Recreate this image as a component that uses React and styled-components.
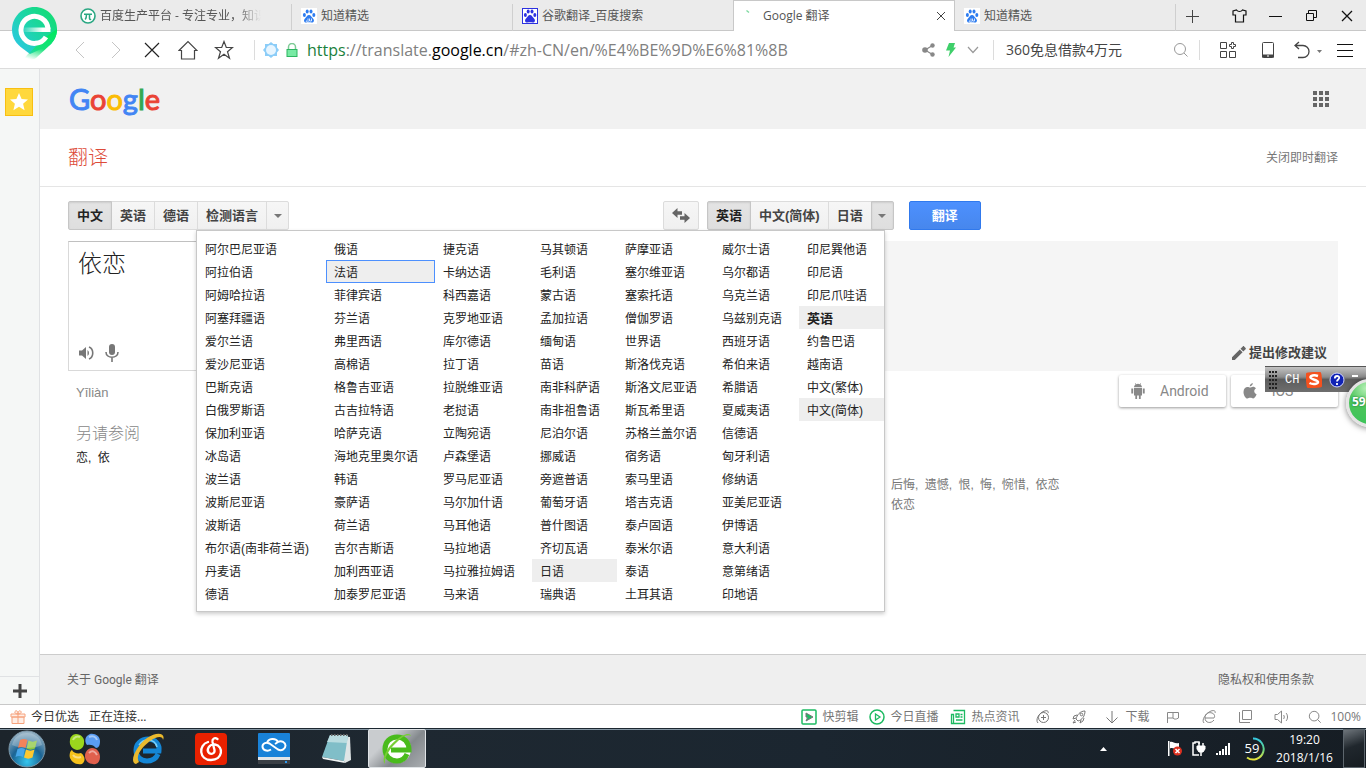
import React from 'react';
import styled, { createGlobalStyle, css } from 'styled-components';

const CJK = '"Noto Sans CJK SC"';
const uiFont = `"Open Sans", ${CJK}, sans-serif`;
const webFont = `"Liberation Sans", ${CJK}, sans-serif`;

const GlobalStyle = createGlobalStyle`
  *, *::before, *::after { box-sizing: border-box; }
  body { margin: 0; background: #fff; color: #333; font: 12px/16px ${webFont}; }
  button, input, textarea { font: inherit; color: inherit; margin: 0; padding: 0; border: 0; background: none; border-radius: 0; outline: none; }
  button { cursor: pointer; white-space: nowrap; }
  a { color: inherit; text-decoration: none; }
  ul, h1, h2, p { margin: 0; padding: 0; list-style: none; font-weight: normal; }
  svg { display: block; flex: none; }
`;

const Screen = styled.div`
  position: relative;
  display: flex;
  flex-direction: column;
  min-height: 100vh;
  overflow: hidden;
`;

/* ---------- tab strip ---------- */
const TabStrip = styled.div`
  display: flex;
  height: 31px;
  padding-left: 71px;
  background: #ebebeb;
  box-shadow: inset 0 -1px #c8c8c8;
  font-family: ${uiFont};
`;

const Tab = styled.div`
  display: flex;
  align-items: center;
  flex: 0 1 221px;
  min-width: 0;
  padding-left: 9px;
  gap: 4px;
  color: #555;
  ${p => p.$active ? css`
    background: #fff;
    border: 1px solid #c8c8c8;
    border-bottom: 0;
    margin-left: -1px;
    flex-basis: 222px;
    padding-right: 6px;
  ` : css`
    &::after { content: ''; align-self: flex-end; width: 1px; height: 27px; background: #cfcfcf; }
  `}
`;

const TabTitle = styled.span`
  flex: 1;
  min-width: 0;
  overflow: hidden;
  white-space: nowrap;
  margin-right: 26px;
  ${p => p.$fade && css`mask-image: linear-gradient(90deg, #000 85%, transparent);`}
`;

const IconButton = styled.button`
  display: flex;
  align-items: center;
  justify-content: center;
  flex: none;
  width: ${p => p.$w || 36}px;
  margin-right: ${p => p.$mr || 0}px;
  color: ${p => p.$color || '#444'};
`;

const WindowButtons = styled.div`
  display: flex;
  margin-left: auto;
  padding-right: 1px;
`;

const BrowserLogo = styled.div`
  position: absolute;
  left: 11px;
  top: 6px;
`;

/* ---------- toolbar ---------- */
const Toolbar = styled.div`
  display: flex;
  align-items: center;
  height: 38px;
  padding: 0 4px 0 62px;
  border-bottom: 1px solid #dcdcdc;
  font-family: ${uiFont};
  ${IconButton} { height: 36px; }
`;

const Rule = styled.span`
  flex: none;
  width: 1px;
  height: 20px;
  margin: 0 ${p => p.$r}px 0 ${p => p.$l}px;
  background: #dcdcdc;
`;

const Address = styled.div`
  flex: 1;
  min-width: 0;
  display: flex;
  overflow: hidden;
  white-space: nowrap;
  margin-left: 3px;
  color: #808080;
  font-size: 16px;
  line-height: 20px;
`;
const Secure = styled.span`color: #1a7f3c;`;
const Domain = styled.span`color: #000;`;

const SearchInput = styled.input`
  width: 164px;
  font-size: 14px;
  line-height: 20px;
  &::placeholder { color: #444; opacity: 1; }
`;

/* ---------- page shell ---------- */
const Body = styled.div`
  display: flex;
  flex: 1;
`;

const SideBar = styled.aside`
  display: flex;
  flex-direction: column;
  justify-content: space-between;
  width: 40px;
  background: #f5f7f6;
  border-right: 1px solid #e0e2e4;
`;

const Favorites = styled.button`
  display: flex;
  align-items: center;
  justify-content: center;
  width: 28px;
  height: 28px;
  margin: 19px 5px;
  background: #ffd83c;
  border: 1px solid #f8bf12;
`;

const AddPanel = styled(IconButton)`
  width: 39px;
  height: 28px;
  border-top: 1px solid #e0e2e4;
`;

const Page = styled.div`
  display: flex;
  flex-direction: column;
  flex: 1;
  min-width: 0;
`;

const GoogleBar = styled.header`
  display: flex;
  align-items: center;
  justify-content: space-between;
  height: 60px;
  padding: 0 36px 0 29px;
  background: #f1f1f1;
`;

const Wordmark = styled.a`
  font: 29px/36px Lato, sans-serif;
`;
const Letter = styled.span`
  color: ${p => p.$color};
  -webkit-text-stroke: 1px ${p => p.$color};
`;

const TitleBar = styled.div`
  display: flex;
  align-items: center;
  justify-content: space-between;
  height: 58px;
  padding: 0 28px;
  border-bottom: 1px solid #e5e5e5;
  color: #777;
`;

const Title = styled.h1`
  color: #dd4b39;
  font-size: 20px;
  font-weight: 300;
  line-height: 28px;
`;

const Workspace = styled.main`
  position: relative;
  display: grid;
  grid-template-columns: 1fr 1fr;
  align-content: start;
  column-gap: 8px;
  flex: 1;
  padding: 14px 28px 24px;
`;

const Controls = styled.div`
  display: flex;
  height: 29px;
  margin-bottom: 11px;
`;

const LangButton = styled.button`
  display: flex;
  align-items: center;
  justify-content: center;
  padding: 1px 8px 0;
  ${p => p.$arrow && css`width: 23px; padding: 0;`}
  border: 1px solid ${p => p.$pressed ? '#c6c6c6' : '#dcdcdc'};
  background: ${p => p.$pressed ? 'linear-gradient(#e4e4e4, #dedede)' : 'linear-gradient(#f6f6f6, #f0f0f0)'};
  ${p => p.$pressed && css`box-shadow: inset 0 1px 2px rgba(0, 0, 0, .1); position: relative;`}
  color: ${p => p.$arrow ? '#777' : p.$pressed ? '#222' : '#444'};
  font-size: 13px;
  font-weight: bold;
  & + & { margin-left: -1px; }
  &:first-child { border-radius: 2px 0 0 2px; }
  &:last-of-type { border-radius: 0 2px 2px 0; }
`;

const LangGroup = styled.div`display: flex;`;

const SwapButton = styled(IconButton)`
  margin-left: auto;
  border: 1px solid #dcdcdc;
  border-radius: 2px;
  background: linear-gradient(#f6f6f6, #f0f0f0);
`;

const TranslateButton = styled.button`
  width: 72px;
  margin-left: 15px;
  padding-top: 1px;
  border: 1px solid #3079ed;
  border-radius: 2px;
  background: linear-gradient(#4d90fe, #4787ed);
  color: #fff;
  font-size: 13px;
  font-weight: bold;
`;

const SourceBox = styled.div`
  display: flex;
  flex-direction: column;
  height: 130px;
  border: 1px solid #d9d9d9;
  border-top-color: #c0c0c0;
`;

const SourceText = styled.textarea`
  flex: 1;
  resize: none;
  padding: 6px 9px;
  color: #222;
  font-size: 24px;
  font-weight: 300;
  line-height: 32px;
`;

const BoxTools = styled.div`
  display: flex;
  height: 34px;
  padding-left: 4px;
  color: #777;
`;

const OutputBox = styled.div`
  display: flex;
  align-items: flex-end;
  justify-content: flex-end;
  height: 130px;
  padding: 0 11px 8px;
  background: #f5f5f5;
`;

const SuggestButton = styled.button`
  display: flex;
  align-items: center;
  gap: 3px;
  height: 20px;
  color: #444;
  font-size: 13px;
  font-weight: bold;
  svg { color: #666; }
`;

const SourceNotes = styled.section`padding: 14px 8px 0;`;
const Pinyin = styled.p`
  color: #888;
  font-size: 13px;
  line-height: 16px;
`;
const SeeAlso = styled.h2`
  margin-top: 21px;
  color: #888;
  font-size: 16px;
  font-weight: 300;
  line-height: 24px;
`;
const SeeAlsoWords = styled.p`
  margin-top: 4px;
  color: #222;
`;
const Word = styled.a`
  &:not(:last-child)::after { content: ','; }
  &:not(:last-child) { margin-right: 3px; }
`;

const TargetNotes = styled.section`padding-top: 4px;`;

const StoreButtons = styled.div`
  display: flex;
  justify-content: flex-end;
  gap: 5px;
`;
const StoreButton = styled.a`
  display: flex;
  align-items: center;
  width: 107px;
  height: 32px;
  padding-left: 12px;
  gap: 15px;
  border-radius: 2px;
  background: #fff;
  box-shadow: 0 1px 3px rgba(0, 0, 0, .4);
  color: #888;
  font: 14px/20px Roboto, sans-serif;
`;

const Synonyms = styled.ul`
  margin-top: 68px;
  padding-left: 184px;
  color: #777;
  line-height: 20px;
`;

const LanguageMenu = styled.div`
  position: absolute;
  left: 156px;
  top: 43px;
  display: flex;
  padding: 6px 0;
  background: #fff;
  border: 1px solid #c8c8c8;
  box-shadow: 0 2px 4px rgba(0, 0, 0, .2);
`;

const LanguageColumn = styled.ul`width: ${p => p.$w}px;`;

const LanguageItem = styled.li`
  height: 23px;
  padding: ${p => p.$focus ? '3px 0 0 7px' : '4px 0 0 8px'};
  border: ${p => p.$focus ? '1px solid #4d90fe' : '0'};
  background: ${p => p.$mark || p.$focus ? '#eee' : 'none'};
  color: #222;
  font-size: ${p => p.$bold ? 13 : 12}px;
  font-weight: ${p => p.$bold ? 'bold' : 'normal'};
  line-height: ${p => p.$bold ? 17 : 19}px;
  white-space: nowrap;
`;

const PageFooter = styled.footer`
  display: flex;
  align-items: center;
  justify-content: space-between;
  height: 50px;
  padding: 0 52px 0 27px;
  border-top: 1px solid #ccc;
  background: #efefef;
  color: #666;
  font-family: Roboto, ${CJK}, sans-serif;
`;

/* ---------- status bar ---------- */
const StatusBar = styled.div`
  display: flex;
  align-items: center;
  height: 24px;
  padding: 0 5px 0 10px;
  border-top: 1px solid #c8c8c8;
  background: #fff;
  font-family: ${uiFont};
`;

const StatusItem = styled.button`
  display: flex;
  align-items: center;
  gap: ${p => p.$gap || 5}px;
  margin-right: ${p => p.$mr || 0}px;
  color: ${p => p.$dark ? '#333' : '#777'};
`;

const StatusTools = styled.div`
  display: flex;
  align-items: center;
  margin-left: auto;
`;

/* ---------- desktop ---------- */
const TaskBar = styled.div`
  display: flex;
  height: 40px;
  border-top: 1px solid #1c2730;
  background: linear-gradient(90deg, #1c242b, #1e2831 30%, #1b2630 60%, #161d24);
  box-shadow: inset 0 1px #8496a3;
  color: #fff;
  font-family: ${uiFont};
`;

const TaskButton = styled(IconButton)`
  ${p => p.$open && css`
    border: 1px solid #dfe3e6;
    border-radius: 2px;
    background: linear-gradient(135deg, #c9cccf 30%, #84898d 60%, #a9adb0);
  `}
`;

const Tray = styled.div`
  display: flex;
  margin-left: auto;
  padding-right: 1px;
`;

const Clock = styled.time`
  width: 77px;
  padding-top: 2px;
  text-align: center;
  line-height: 18px;
`;

const ShowDesktop = styled.button`
  width: 22px;
  border: 1px solid #5d666d;
  background: linear-gradient(160deg, #6d747a, #20272d 45%, #161c21);
`;

const ImeBar = styled.div`
  position: absolute;
  right: 0;
  top: 366px;
  display: flex;
  align-items: center;
  gap: 7px;
  width: 101px;
  height: 26px;
  padding-left: 4px;
  border-top: 1px solid #555;
  background: linear-gradient(#c2c2c2, #8c8c8c 40%, #5c5c5c 50%, #6e6e6e);
  color: #fff;
  font: 12px/16px "Liberation Mono", monospace;
`;

const Ball = styled.div`
  position: absolute;
  right: -28px;
  top: 379px;
  width: 48px;
  height: 48px;
  padding-left: 3px;
  border: 3px solid #e4e4e4;
  border-radius: 50%;
  background: radial-gradient(circle at 40% 15%, #b4efb4, #4cc45a 40%, #36c45a);
  box-shadow: 0 1px 6px rgba(0, 0, 0, .5);
  color: #fff;
  font: bold 12px/40px "Open Sans", sans-serif;
  text-shadow: 0 0 2px #063;
`;

/* ---------- drawings ---------- */
const Line = ({ w = 16, h = w, vb, sw = 1, children, ...rest }) => (
  <svg width={w} height={h} viewBox={vb || `0 0 ${w} ${h}`} fill="none" stroke="currentColor" strokeWidth={sw} {...rest}>{children}</svg>
);
const Solid = ({ w = 16, h = w, vb, children, ...rest }) => (
  <svg width={w} height={h} viewBox={vb || `0 0 ${w} ${h}`} fill="currentColor" {...rest}>{children}</svg>
);

const Paw = ({ bg, fg, framed }) => (
  <Solid>
    <rect width="16" height="16" fill={bg} />
    {framed && <rect x=".5" y=".5" width="15" height="15" fill="none" stroke={fg} />}
    <g fill={fg}>
      <ellipse cx="3.4" cy="7" rx="1.500" ry="2" />
      <ellipse cx="6.2" cy="3.6" rx="1.500" ry="2" />
      <ellipse cx="10" cy="3.6" rx="1.500" ry="2" />
      <ellipse cx="12.8" cy="7" rx="1.500" ry="2" />
      <path d="M8 7c2 0 2.300 2 4 3.500 2 2 .5 4.500-1.500 4-1.800-.4-3.200-.4-5 0-2 .5-3.500-2-1.500-4C5.700 9 6 7 8 7z" />
    </g>
    {!framed && <path d="M5.500 12.500a1 1 0 1 0 1.500 0v-2M8.500 10.500v2.500h2v-2.500" fill="none" stroke="#fff" strokeWidth=".8" />}
  </Solid>
);

const PiIcon = () => (
  <Line><circle cx="8" cy="8" r="7" stroke="#2aa782" strokeWidth="1.600" fill="#fff" /><path d="M4 6.200h8M6.500 6.200c0 2-.3 4-1.300 5.300M9.500 6.200v4c0 1.200.6 1.500 1.600 1" stroke="#2aa782" strokeWidth="1.500" /></Line>
);

const PinLogo = () => (
  <svg width="47" height="56" viewBox="0 0 47 56">
    <defs>
      <linearGradient id="pin" x1="0" y1="1" x2="1" y2=".2"><stop offset="0" stopColor="#2fc4f0" /><stop offset=".45" stopColor="#1fd3b4" /><stop offset="1" stopColor="#12dd72" /></linearGradient>
      <linearGradient id="tail" x1=".7" y1="0" x2=".4" y2="1"><stop offset="0" stopColor="#00e860" /><stop offset=".6" stopColor="#17e27a" /><stop offset="1" stopColor="#17e27a" stopOpacity="0" /></linearGradient>
      <linearGradient id="bar" x1="0" x2="1"><stop offset="0" stopColor="#fff" stopOpacity=".1" /><stop offset=".7" stopColor="#fff" /></linearGradient>
    </defs>
    <path d="M23.500 1C11 1 1 11 1 23.500 1 33 6 38 11 42l8 6 20-9c4-4 7-9 7-15.500C46 11 36 1 23.500 1z" fill="url(#pin)" />
    <path d="M46 23c0 7-3 12-7 16L25 52c-3 2-9 3-14 3l6-7 19-18z" fill="url(#tail)" />
    <path d="M35 31a13.500 13.500 0 1 1 2-8" fill="none" stroke="#fff" strokeWidth="5" />
    <path d="M13 21.500h26.500v4.500H13z" fill="url(#bar)" />
  </svg>
);

const Lock = () => (
  <Line w={12} h={14}><path d="M2.500 6V4a3.500 3.500 0 0 1 7 0v2" stroke="#7ecb96" strokeWidth="1.500" /><rect x="1" y="6.500" width="10" height="7" fill="#78eaa4" stroke="#2db561" /></Line>
);
const Sun = () => (
  <Solid w={18}><path d="M9 1l2.400 2H15v3.600L17 9l-2 2.400V15h-3.600L9 17l-2.400-2H3v-3.600L1 9l2-2.400V3h3.600z" fill="#8ccdf8" /><circle cx="9" cy="9" r="5" fill="#e7f5ff" /></Solid>
);
const Search = ({ w = 16 }) => <Line w={w} vb="0 0 16 16"><circle cx="7" cy="7" r="5.500" /><path d="M11 11l3.500 3.500" /></Line>;
const Caret = () => <Solid w={8} h={4}><path d="M0 0h8L4 4z" /></Solid>;
const Apple = () => (
  <Solid w={14} h={16}><path d="M9.800 0c.1 1.700-1.300 3.400-3 3.400C6.600 1.700 8.200.2 9.800 0zM7 4.500c.8 0 1.600-.8 3-.8 1.200 0 2.300.6 3 1.600-2.600 1.600-2.200 5 .6 6-.7 2-2 4.200-3.400 4.200-1.100 0-1.500-.7-2.900-.7s-1.800.7-2.900.7C2.500 15.500.5 12 .5 8.900c0-3.200 2-5 4-5 1.200 0 1.900.6 2.500.6z" /></Solid>
);
const Android = () => (
  <Solid w={14} h={16}><path d="M3 5h8v7.500H9.700V16H7.900v-3.500H6.100V16H4.300v-3.500H3zM.3 5.500h1.900v5H.3zm11.500 0h1.900v5h-1.900zM3 4.300c0-1.300.7-2.200 1.600-2.800L3.900.4l.4-.3.8 1.200a4.500 4.500 0 0 1 3.800 0L9.700.1l.4.3-.7 1.100c.9.600 1.600 1.500 1.600 2.800z" /></Solid>
);

const StartOrb = () => (
  <svg width="38" height="38" viewBox="0 0 38 38">
    <defs><radialGradient id="orb" cx=".5" cy=".85" r=".85"><stop offset="0" stopColor="#35c6ee" /><stop offset=".5" stopColor="#1b6494" /><stop offset="1" stopColor="#9fb8c8" /></radialGradient></defs>
    <circle cx="19" cy="19" r="18" fill="url(#orb)" stroke="#7c97a8" />
    <path d="M12 10c2.500-1.500 5-1.500 7.500 0l-2 8c-2.500-1.500-5-1.500-7.500 0z" fill="#ee5a24" />
    <path d="M20.500 10.500c3 1.500 5.500 1.500 8.500 0l-2 8c-3 1.500-5.500 1.500-8.500 0z" fill="#8cc63f" />
    <path d="M9.500 19c3-1.500 5-1.500 7.500 0l-2 8c-2.500-1.500-5-1.500-7.500 0z" fill="#46a6e8" />
    <path d="M18 19.500c3 1.500 5.500 1.500 8.500 0l-2 8c-3 1.500-5.500 1.500-8.500 0z" fill="#fdc82f" />
    <path d="M4 15C6 6 13 3 19 3s13 3 15 12c-8 4-22 4-30 0z" fill="#fff" opacity=".25" />
  </svg>
);
const Petals = () => (
  <svg width="32" height="32" viewBox="0 0 32 32">
    <path d="M7 1c5 0 9 4 8 9 0 4-3 7-7 7-5-1-8-5-7-10 0-3 3-6 6-6z" fill="#9bd61d" />
    <path d="M21 1c5-1 10 2 10 7 0 4-1 7-4 7-2-3-6-4-9-3-3-4-2-9 3-11z" fill="#5a9cf2" />
    <path d="M3 17c1 3 6 4 9 3 4 3 5 8 1 11-5 1-10-1-12-6-1-3 0-7 2-8z" fill="#f6c11b" />
    <path d="M23 15c5 0 8 4 8 9s-3 8-7 7c-5 0-8-4-8-8s3-8 7-8z" fill="#e0604d" />
    <path d="M4 7c1-3 4-4 7-3M20 4c4-2 7 0 8 3M4 22c2 3 5 3 8 2M20 20c3-3 6-2 8 2" stroke="#fff" strokeOpacity=".45" strokeWidth="2" fill="none" />
  </svg>
);
const IeIcon = () => (
  <svg width="34" height="32" viewBox="0 0 34 32">
    <path d="M27 21c-2 5-6 7-11 7-7 0-11-5-11-11S10 6 17 6c7 0 12 5 11 12H12" fill="none" stroke="#1486d6" strokeWidth="5" />
    <path d="M8 12c2-3 5-5 9-5 5 0 8 3 9 7" fill="none" stroke="#7cd0f8" strokeWidth="1.500" />
    <path d="M5 31C-2 30 4 14 16 5 26-2 35 0 32 7c0-4-6-4-13 1C11 14 4 23 8 29z" fill="#eab92d" />
  </svg>
);
const NetEase = () => (
  <svg width="32" height="32" viewBox="0 0 32 32">
    <rect width="32" height="32" rx="4" fill="#e92100" />
    <path d="M13 9C3 12 4 27 16 27c12 0 13-14 4-15.500-6-.5-9 5.500-6 8.500 3 2 6 0 5.500-3L17.500 9c-.5-3 2-5 5-3" fill="none" stroke="#fff" strokeWidth="2.300" strokeLinecap="round" />
  </svg>
);
const CloudDrive = () => (
  <svg width="32" height="32" viewBox="0 0 32 32">
    <rect width="32" height="25" rx="1" fill="#1982d8" />
    <path d="M0 25h32v6H0z" fill="#3a3f45" /><path d="M0 24h32v3H0z" fill="#e3e6e8" /><path d="M27 28h2v2h-2z" fill="#2f9bf0" />
    <path d="M13 16.500C9 19 4.500 17 4.500 13.500s4-4.500 7-3l8.500 6c4 2 7.500-1 7.500-4s-4-5.500-7.500-3.500l-3 2M9 10c1-5 9-5.500 11-1" fill="none" stroke="#fff" strokeWidth="2" />
  </svg>
);
const Notepad = () => (
  <svg width="32" height="30" viewBox="0 0 32 30">
    <path d="M9 1l20 2 1 23-6 3z" fill="#dfe5e6" /><path d="M9 1h18l-4 26L1 23z" fill="#80bec8" /><path d="M9 1h18l-1 8-20-1z" fill="#b9dce0" /><path d="M1 23l22 4 1 2L2 25z" fill="#f0f4f4" /><path d="M10 1h17" stroke="#666" strokeWidth="2" strokeDasharray="1.500 1.500" />
  </svg>
);
const GreenE = () => (
  <svg width="32" height="32" viewBox="0 0 32 32">
    <circle cx="16" cy="16" r="14" fill="#fff" />
    <path d="M26 21c-2 5-6 7-10 7-7 0-12-5-12-12S9 4 16 4s12 5 12 13H10" fill="none" stroke="#49bb1c" strokeWidth="5" />
    <path d="M4 31C0 27 5 15 15 7 22 1 29-1 30 3c-4-2-9 1-14 6C8 16 3 25 4 31z" fill="#77cf35" />
  </svg>
);

/* ---------- data ---------- */
const columns = [
  [129, '阿尔巴尼亚语 阿拉伯语 阿姆哈拉语 阿塞拜疆语 爱尔兰语 爱沙尼亚语 巴斯克语 白俄罗斯语 保加利亚语 冰岛语 波兰语 波斯尼亚语 波斯语 布尔语(南非荷兰语) 丹麦语 德语'],
  [109, '俄语 法语 菲律宾语 芬兰语 弗里西语 高棉语 格鲁吉亚语 古吉拉特语 哈萨克语 海地克里奥尔语 韩语 豪萨语 荷兰语 吉尔吉斯语 加利西亚语 加泰罗尼亚语'],
  [97, '捷克语 卡纳达语 科西嘉语 克罗地亚语 库尔德语 拉丁语 拉脱维亚语 老挝语 立陶宛语 卢森堡语 罗马尼亚语 马尔加什语 马耳他语 马拉地语 马拉雅拉姆语 马来语'],
  [85, '马其顿语 毛利语 蒙古语 孟加拉语 缅甸语 苗语 南非科萨语 南非祖鲁语 尼泊尔语 挪威语 旁遮普语 葡萄牙语 普什图语 齐切瓦语 日语 瑞典语'],
  [97, '萨摩亚语 塞尔维亚语 塞索托语 僧伽罗语 世界语 斯洛伐克语 斯洛文尼亚语 斯瓦希里语 苏格兰盖尔语 宿务语 索马里语 塔吉克语 泰卢固语 泰米尔语 泰语 土耳其语'],
  [85, '威尔士语 乌尔都语 乌克兰语 乌兹别克语 西班牙语 希伯来语 希腊语 夏威夷语 信德语 匈牙利语 修纳语 亚美尼亚语 伊博语 意大利语 意第绪语 印地语'],
  [85, '印尼巽他语 印尼语 印尼爪哇语 英语 约鲁巴语 越南语 中文(繁体) 中文(简体)'],
];
const marked = ['日语', '英语', '中文(简体)'];
const wordmark = [['G', '#4285f4'], ['o', '#ea4335'], ['o', '#fbbc05'], ['g', '#4285f4'], ['l', '#34a853'], ['e', '#ea4335']];
const words = list => list.split(' ').map((w, i) => <React.Fragment key={w}>{i > 0 && ' '}<Word href={`#${w}`}>{w}</Word></React.Fragment>);

export default function App() {
  return (
    <Screen>
      <GlobalStyle />
      <TabStrip>
        <Tab><PiIcon /><TabTitle $fade>百度生产平台 - 专注专业，知识分享</TabTitle></Tab>
        <Tab><Paw bg="#fff" fg="#2d7cf0" /><TabTitle>知道精选</TabTitle></Tab>
        <Tab><Paw bg="#fff" fg="#2d32e0" framed /><TabTitle>谷歌翻译_百度搜索</TabTitle></Tab>
        <Tab $active>
          <Line><path d="M3.500 2.500l2.500 2" stroke="#7ed9a0" strokeWidth="1.500" /></Line>
          <TabTitle>Google 翻译</TabTitle>
          <IconButton $w={14} aria-label="关闭标签"><Line w={10}><path d="M1 1l8 8M9 1L1 9" /></Line></IconButton>
        </Tab>
        <Tab><Paw bg="#fff" fg="#2d7cf0" /><TabTitle>知道精选</TabTitle></Tab>
        <IconButton $w={32} aria-label="新标签"><Line w={14}><path d="M7.500 1v13M1 7.500h13" /></Line></IconButton>
        <WindowButtons>
          <IconButton aria-label="皮肤"><Line w={15} h={14}><path d="M4.500 1C6 3 9 3 10.500 1l3.500 1v4h-2.500v7h-8V6H1V2z" stroke="#111" strokeWidth="1.200" /></Line></IconButton>
          <IconButton aria-label="最小化"><Line w={13}><path d="M0 7.500h13" stroke="#111" /></Line></IconButton>
          <IconButton aria-label="还原"><Line w={11}><path d="M.5 3.500h7v7h-7zM2.500 3.500v-3h8v7h-3" stroke="#111" /></Line></IconButton>
          <IconButton aria-label="关闭"><Line w={12}><path d="M1 1l10 10M11 1L1 11" stroke="#111" strokeWidth="1.300" /></Line></IconButton>
        </WindowButtons>
      </TabStrip>

      <Toolbar>
        <IconButton $color="#c4c4c4" aria-label="后退"><Line w={10} h={18}><path d="M9 1L1 9l8 8" /></Line></IconButton>
        <IconButton $color="#c4c4c4" aria-label="前进"><Line w={10} h={18}><path d="M1 1l8 8-8 8" /></Line></IconButton>
        <IconButton $color="#222" aria-label="停止"><Line w={16}><path d="M1 1l14 14M15 1L1 15" strokeWidth="1.200" /></Line></IconButton>
        <IconButton aria-label="主页"><Line w={20}><path d="M1 10.500l9-9 9 9h-2.500V19h-13v-8.500z" strokeWidth="1.200" /></Line></IconButton>
        <IconButton aria-label="收藏"><Line w={20}><path d="M10 1.500l2.300 6h6.200l-5 4.200 2 6.500-5.500-4-5.500 4 2-6.500-5-4.200h6.200z" strokeWidth="1.200" /></Line></IconButton>
        <Rule $l={12} $r={7} />
        <Sun />
        <IconButton $w={24} aria-label="安全"><Lock /></IconButton>
        <Address><Secure>https</Secure>://translate.<Domain>google.cn</Domain>/#zh-CN/en/%E4%BE%9D%E6%81%8B</Address>
        <IconButton $w={22} $color="#888" aria-label="分享"><Solid w={14}><circle cx="3" cy="7" r="2.800" /><circle cx="10.500" cy="2.500" r="2.200" /><circle cx="10.500" cy="11.500" r="2.200" /><path d="M3 7l7.500-4.500M3 7l7.500 4.500" stroke="currentColor" strokeWidth="1.300" /></Solid></IconButton>
        <IconButton $w={22} $color="#3fcf6a" aria-label="极速模式"><Solid w={10} h={14}><path d="M3 0h6L7.500 4.500H10L2.500 14 4 7.500H0z" /></Solid></IconButton>
        <IconButton $w={22} $color="#999" aria-label="展开"><Line w={12} h={8}><path d="M1 1l5 5.500L11 1" strokeWidth="1.200" /></Line></IconButton>
        <Rule $l={9} $r={12} />
        <SearchInput aria-label="搜索" placeholder="360免息借款4万元" />
        <IconButton $w={22} $color="#999" aria-label="搜索"><Search /></IconButton>
        <Rule $l={7} $r={8} />
        <IconButton $w={40} aria-label="扩展"><Line w={16}><path d="M.5.5h6v6h-6zM.5 9.500h6v6h-6zM9.500 9.500h6v6h-6zM11.500.5h2v2h2v2h-2v2h-2v-2h-2v-2h2z" /></Line></IconButton>
        <IconButton $w={40} aria-label="手机"><Line w={12} h={16}><rect x=".5" y=".5" width="11" height="15" rx="1" /><path d="M0 14h12" strokeWidth="3" /><path d="M5 14h2" stroke="#fff" /></Line></IconButton>
        <IconButton $w={40} aria-label="撤销"><Line w={28} h={18}><path d="M5 1L1 4.500 5 8M1 4.500h8a6 6 0 0 1 0 12H4" strokeWidth="1.300" /><path d="M23 9h5l-2.500 3z" fill="#777" stroke="none" /></Line></IconButton>
        <IconButton $w={34} $color="#111" aria-label="菜单"><Line w={16} h={14}><path d="M0 1.500h16M0 7.500h16M0 13.500h16" /></Line></IconButton>
      </Toolbar>

      <Body>
        <SideBar>
          <Favorites aria-label="收藏夹"><Solid w={20}><path d="M10 1l2.600 6 6.400.6-4.900 4.200 1.500 6.400-5.600-3.400-5.600 3.400 1.500-6.400L1 7.600 7.400 7z" fill="#fff" /></Solid></Favorites>
          <AddPanel aria-label="添加"><Line w={14}><path d="M7 0v14M0 7h14" strokeWidth="3" /></Line></AddPanel>
        </SideBar>
        <Page>
          <GoogleBar>
            <Wordmark href="#google" aria-label="Google">{wordmark.map(([l, c], i) => <Letter key={i} $color={c}>{l}</Letter>)}</Wordmark>
            <IconButton $w={18} $color="#666" aria-label="应用"><Solid w={16}>{[0, 6, 12].map(y => [0, 6, 12].map(x => <rect key={`${x}-${y}`} x={x} y={y} width="4" height="4" />))}</Solid></IconButton>
          </GoogleBar>
          <TitleBar><Title>翻译</Title><a href="#instant">关闭即时翻译</a></TitleBar>

          <Workspace>
            <Controls>
              <LangGroup>
                <LangButton $pressed>中文</LangButton>
                <LangButton>英语</LangButton>
                <LangButton>德语</LangButton>
                <LangButton>检测语言</LangButton>
                <LangButton $arrow aria-label="更多源语言"><Caret /></LangButton>
              </LangGroup>
              <SwapButton aria-label="互换语言" $color="#666"><Solid w={18} h={15}><path d="M0 5l5.500-5v3.200H10v3.600H5.500V10zM18 10l-5.500-5v3.200H8v3.600h4.500V15z" /></Solid></SwapButton>
            </Controls>
            <Controls>
              <LangGroup>
                <LangButton $pressed>英语</LangButton>
                <LangButton>中文(简体)</LangButton>
                <LangButton>日语</LangButton>
                <LangButton $arrow $pressed aria-label="更多目标语言"><Caret /></LangButton>
              </LangGroup>
              <TranslateButton>翻译</TranslateButton>
            </Controls>

            <SourceBox>
              <SourceText aria-label="原文" defaultValue="依恋" />
              <BoxTools>
                <IconButton $w={26} $color="inherit" aria-label="朗读"><Solid w={15} h={14}><path d="M0 4.500h3L7 1v12L3 9.500H0z" /><path d="M8.500 4c2 1.500 2 4.500 0 6z" /><path d="M10 1c5 2 5 10 0 12" fill="none" stroke="currentColor" strokeWidth="1.600" /></Solid></IconButton>
                <IconButton $w={26} $color="inherit" aria-label="语音输入"><Solid w={14} h={18}><rect x="4" y="0" width="6" height="11" rx="3" /><path d="M1 8c0 7 12 7 12 0M7 13v5" fill="none" stroke="currentColor" strokeWidth="1.600" /></Solid></IconButton>
              </BoxTools>
            </SourceBox>
            <OutputBox>
              <SuggestButton><Solid w={14}><path d="M0 11.200V14h2.800l7.800-7.800-2.800-2.800zM8.500 2.700l2.800 2.800 2.300-2.300c.4-.4.4-.9 0-1.300L12.100.400c-.4-.4-.9-.4-1.300 0z" /></Solid>提出修改建议</SuggestButton>
            </OutputBox>

            <SourceNotes>
              <Pinyin>Yīliàn</Pinyin>
              <SeeAlso>另请参阅</SeeAlso>
              <SeeAlsoWords>{words('恋 依')}</SeeAlsoWords>
            </SourceNotes>
            <TargetNotes>
              <StoreButtons>
                <StoreButton href="#android"><Android />Android</StoreButton>
                <StoreButton href="#ios"><Apple />iOS</StoreButton>
              </StoreButtons>
              <Synonyms><li>{words('后悔 遗憾 恨 悔 惋惜 依恋')}</li><li>{words('依恋')}</li></Synonyms>
            </TargetNotes>

            <LanguageMenu>
              {columns.map(([w, names]) => (
                <LanguageColumn key={names} $w={w}>
                  {names.split(' ').map(n => (
                    <LanguageItem key={n} $mark={marked.includes(n)} $bold={n === '英语'} $focus={n === '法语'}>{n}</LanguageItem>
                  ))}
                </LanguageColumn>
              ))}
            </LanguageMenu>
          </Workspace>

          <PageFooter><a href="#about">关于 Google 翻译</a><a href="#privacy">隐私权和使用条款</a></PageFooter>
        </Page>
      </Body>

      <StatusBar>
        <StatusItem $dark $mr={10}><Line w={16}><path d="M1 5h14v3H1zM2 8h12v6.500H2zM8 5v9.500M8 5C5 5 4 3 5.500 2S8 3 8 5c0-2 1-4 2.500-3S11 5 8 5" stroke="#f6a27c" fill="#feeee6" /></Line>今日优选</StatusItem>
        <span>正在连接...</span>
        <StatusTools>
          <StatusItem $mr={11}><Line w={16}><rect x="1" y="1" width="14" height="14" rx="1" stroke="#1dba62" strokeWidth="1.500" /><path d="M5 4l7 4-7 4 1.500-3.500L5 8z" fill="#1dba62" /></Line>快剪辑</StatusItem>
          <StatusItem $mr={12}><Line w={16}><circle cx="8" cy="8" r="7" stroke="#1dba62" strokeWidth="1.500" /><path d="M6.500 5l4.500 3-4.500 3z" stroke="#1dba62" strokeWidth="1.300" /></Line>今日直播</StatusItem>
          <StatusItem $mr={6}><Line w={16}><path d="M3.500 1.500h11v13h-13v-9h2v9M6 5h3v3H6zM10.500 5.500h2M10.500 8h2M6 11h6.500" stroke="#1dba62" strokeWidth="1.300" /></Line>热点资讯</StatusItem>
          <IconButton $color="#777" aria-label="加速"><Line w={14}><circle cx="7.500" cy="7.500" r="5" /><path d="M2 13C-1 10 3 3 8 1.200c3-1.200 5 0 4 2M7.500 5v5M5 7.500h5" /></Line></IconButton>
          <IconButton $color="#777" $mr={7} aria-label="清理"><Line w={14}><path d="M13 1c-5 0-8 4-9 8l2 2c4-1 7-5 7-10zM5 5L2 6 1 9l3-1M9 10l-1 3 3-2 1-3M3 10l-2 3 3-1" /><circle cx="9.500" cy="4.500" r="1.300" /></Line></IconButton>
          <StatusItem $mr={6}><Line w={16} h={14}><path d="M8 1v12M2.500 7.500L8 13l5.500-5.500" /></Line>下载</StatusItem>
          <IconButton $color="#888" aria-label="举报"><Line w={14} h={12}><path d="M1.500 12V1.500h11V7C10 8.500 8 8.500 7 7H1.500M7 1.500V7" /></Line></IconButton>
          <IconButton $color="#888" aria-label="内核"><Line w={14}><path d="M12 10c-3 4-9 3-9-2s4-6 7-5 3 4 2 5H3M2 13C-1 10 4 3 9 1c3-1 5 0 4 2" /></Line></IconButton>
          <IconButton $color="#888" aria-label="窗口"><Line w={13}><path d="M3.500.5h9v9h-9zM.5 2v10.500H11" /></Line></IconButton>
          <IconButton $color="#888" $mr={9} aria-label="静音"><Line w={15} h={14}><path d="M1 4.500h2.500l4-3.500v12l-4-3.500H1zM9.500 5c1 1 1 3 0 4M12 3c2 2 2 6 0 8" /></Line></IconButton>
          <StatusItem $gap={8}><Search w={14} />100%</StatusItem>
        </StatusTools>
      </StatusBar>

      <TaskBar>
        <TaskButton $w={53} aria-label="开始"><StartOrb /></TaskButton>
        <TaskButton $w={63} aria-label="应用一"><Petals /></TaskButton>
        <TaskButton $w={63} aria-label="Internet Explorer"><IeIcon /></TaskButton>
        <TaskButton $w={63} aria-label="网易云音乐"><NetEase /></TaskButton>
        <TaskButton $w={63} aria-label="云盘"><CloudDrive /></TaskButton>
        <TaskButton $w={63} aria-label="记事本"><Notepad /></TaskButton>
        <TaskButton $w={58} $open aria-label="浏览器"><GreenE /></TaskButton>
        <Tray>
          <IconButton $w={20} $mr={50} $color="#fff" aria-label="显示隐藏图标"><Solid w={7} h={4}><path d="M0 4h7L3.500 0z" /></Solid></IconButton>
          <IconButton $w={24} $color="#fff" aria-label="操作中心"><Solid w={14} h={15}><path d="M0 0h1.500v15H0zM2 1c3-1 4 2 9 1v6C7 9 5 6 2 7.500z" /><circle cx="9.500" cy="10" r="4.500" fill="#dc3020" /><path d="M7.500 8l4 4M11.500 8l-4 4" stroke="#fff" strokeWidth="1.500" /></Solid></IconButton>
          <IconButton $w={24} $color="#fff" aria-label="电源"><Line w={14} h={15}><path d="M7 14H1V2h2V1h4v1h1" strokeWidth="1.500" /><path d="M5 5h8v3l-2 3H7L5 8z" fill="#fff" /><path d="M7 5V2M11 5V2M9 10v5" strokeWidth="1.500" /></Line></IconButton>
          <IconButton $w={24} $mr={5} $color="#fff" aria-label="网络"><Solid w={14} h={12}><path d="M0 10h2v2H0zM3 8h2v4H3zM6 6h2v6H6zM9 3h2v9H9zM12 0h2v12h-2z" /></Solid></IconButton>
          <IconButton $w={26} $color="#fff" aria-label="电量 59">
            <svg width="24" height="24" viewBox="0 0 24 24">
              <defs><linearGradient id="ring" x1="0" y1="0" x2="0" y2="1"><stop offset="0" stopColor="#37c8e0" /><stop offset=".5" stopColor="#5fd28a" /><stop offset="1" stopColor="#e8e23a" /></linearGradient></defs>
              <path d="M12 1.500a10.500 10.500 0 1 1-6 19" fill="none" stroke="url(#ring)" strokeWidth="2" />
              <text x="11" y="16" textAnchor="middle" fontSize="13" fontFamily="Open Sans" fill="#fff">59</text>
            </svg>
          </IconButton>
          <Clock>19:20<br />2018/1/16</Clock>
          <ShowDesktop aria-label="显示桌面" />
        </Tray>
      </TaskBar>

      <BrowserLogo><PinLogo /></BrowserLogo>
      <ImeBar>
        <Solid w={9} h={18}>{[0, 4, 8, 12, 16].map(y => [0, 3, 6].map(x => <rect key={`${x}-${y}`} x={x} y={y} width="2" height="2" fill="#222" />))}</Solid>
        <span>CH</span>
        <Solid w={16}><rect width="16" height="16" rx="3" fill="#f4511e" transform="rotate(-6 8 8)" /><path d="M12 4c-4-1.500-8-.5-7.500 1.500S12 8 12 10s-5 2.800-8.500 1" fill="none" stroke="#fff" strokeWidth="2.500" /></Solid>
        <Solid w={16}><circle cx="8" cy="8" r="7" fill="#1022b4" stroke="#cfd3ff" /><path d="M5.800 6.500c0-3.500 4.700-3 4.400-.5C10 7.500 8 7.500 8 9.500M8 11v2" fill="none" stroke="#fff" strokeWidth="1.800" /></Solid>
        <Solid w={6} h={16}><path d="M0 3h6v2H0z" fill="#fff" /></Solid>
      </ImeBar>
      <Ball>59</Ball>
    </Screen>
  );
}
